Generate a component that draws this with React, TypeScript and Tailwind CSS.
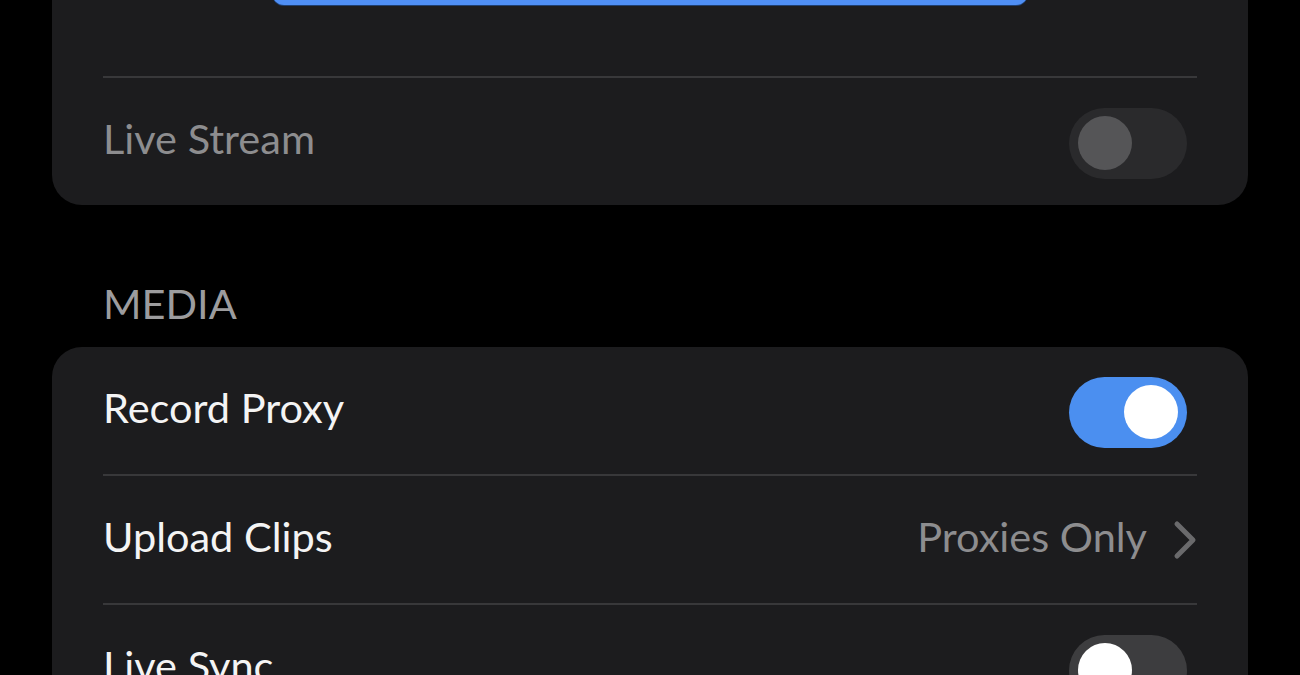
import * as React from "react";

function Toggle({ on, disabled }: { on: boolean; disabled?: boolean }) {
  const track = disabled ? "bg-[#2a2a2c]" : on ? "bg-[#4b8ff0]" : "bg-[#3d3d3f]";
  const knob = disabled ? "bg-[#555557]" : "bg-white";
  return (
    <div
      className={`mt-[3px] flex h-[71px] w-[118px] shrink-0 items-center rounded-full px-[9px] ${track} ${
        on ? "justify-end" : "justify-start"
      }`}
    >
      <div className={`h-[54px] w-[54px] rounded-full ${knob}`} />
    </div>
  );
}

function Row({
  label,
  dim,
  children,
}: {
  label: string;
  dim?: boolean;
  children: React.ReactNode;
}) {
  return (
    <div className="flex h-[127px] items-center justify-between">
      <span className={`pb-[6px] text-[41.5px] ${dim ? "text-[#8d8d8f]" : "text-[#f4f4f4]"}`}>
        {label}
      </span>
      <div className="mr-[10px] flex items-center">{children}</div>
    </div>
  );
}

const Divider = () => <div className="h-[2px] bg-[#38383a]" />;

export default function App() {
  return (
    <div
      className="h-[675px] overflow-hidden bg-black px-[52px]"
      style={{ fontFamily: "Lato, 'Noto Sans', sans-serif" }}
    >
      {/* stream card, scrolled partly out of view */}
      <div className="-mt-[90px] rounded-[30px] bg-[#1c1c1e] px-[51px]">
        <div className="px-[169px] pb-[71px]">
          <div className="h-[95px] rounded-b-[12px] bg-[#4f8ff5] shadow-[0_1px_0_#1f3f70]" />
        </div>
        <Divider />
        <Row label="Live Stream" dim>
          <Toggle on={false} disabled />
        </Row>
      </div>

      <div className="pl-[51px] pt-[74px] pb-[20px] text-[41.5px] leading-[48px] text-[#9c9c9e]">
        MEDIA
      </div>

      <div className="rounded-[30px] bg-[#1c1c1e] px-[51px]">
        <Row label="Record Proxy">
          <Toggle on />
        </Row>
        <Divider />
        <Row label="Upload Clips">
          <span className="pb-[6px] text-[41.5px] text-[#8d8d8f]">Proxies Only</span>
          <svg
            className="ml-[26px] -mr-[10px]"
            width="24"
            height="40"
            viewBox="0 0 24 40"
            fill="none"
            stroke="#6a6a6c"
            strokeWidth="5"
            strokeLinecap="round"
            strokeLinejoin="round"
          >
            <path d="M4 4 L20 20 L4 36" />
          </svg>
        </Row>
        <Divider />
        <Row label="Live Sync">
          <Toggle on={false} />
        </Row>
      </div>
    </div>
  );
}
